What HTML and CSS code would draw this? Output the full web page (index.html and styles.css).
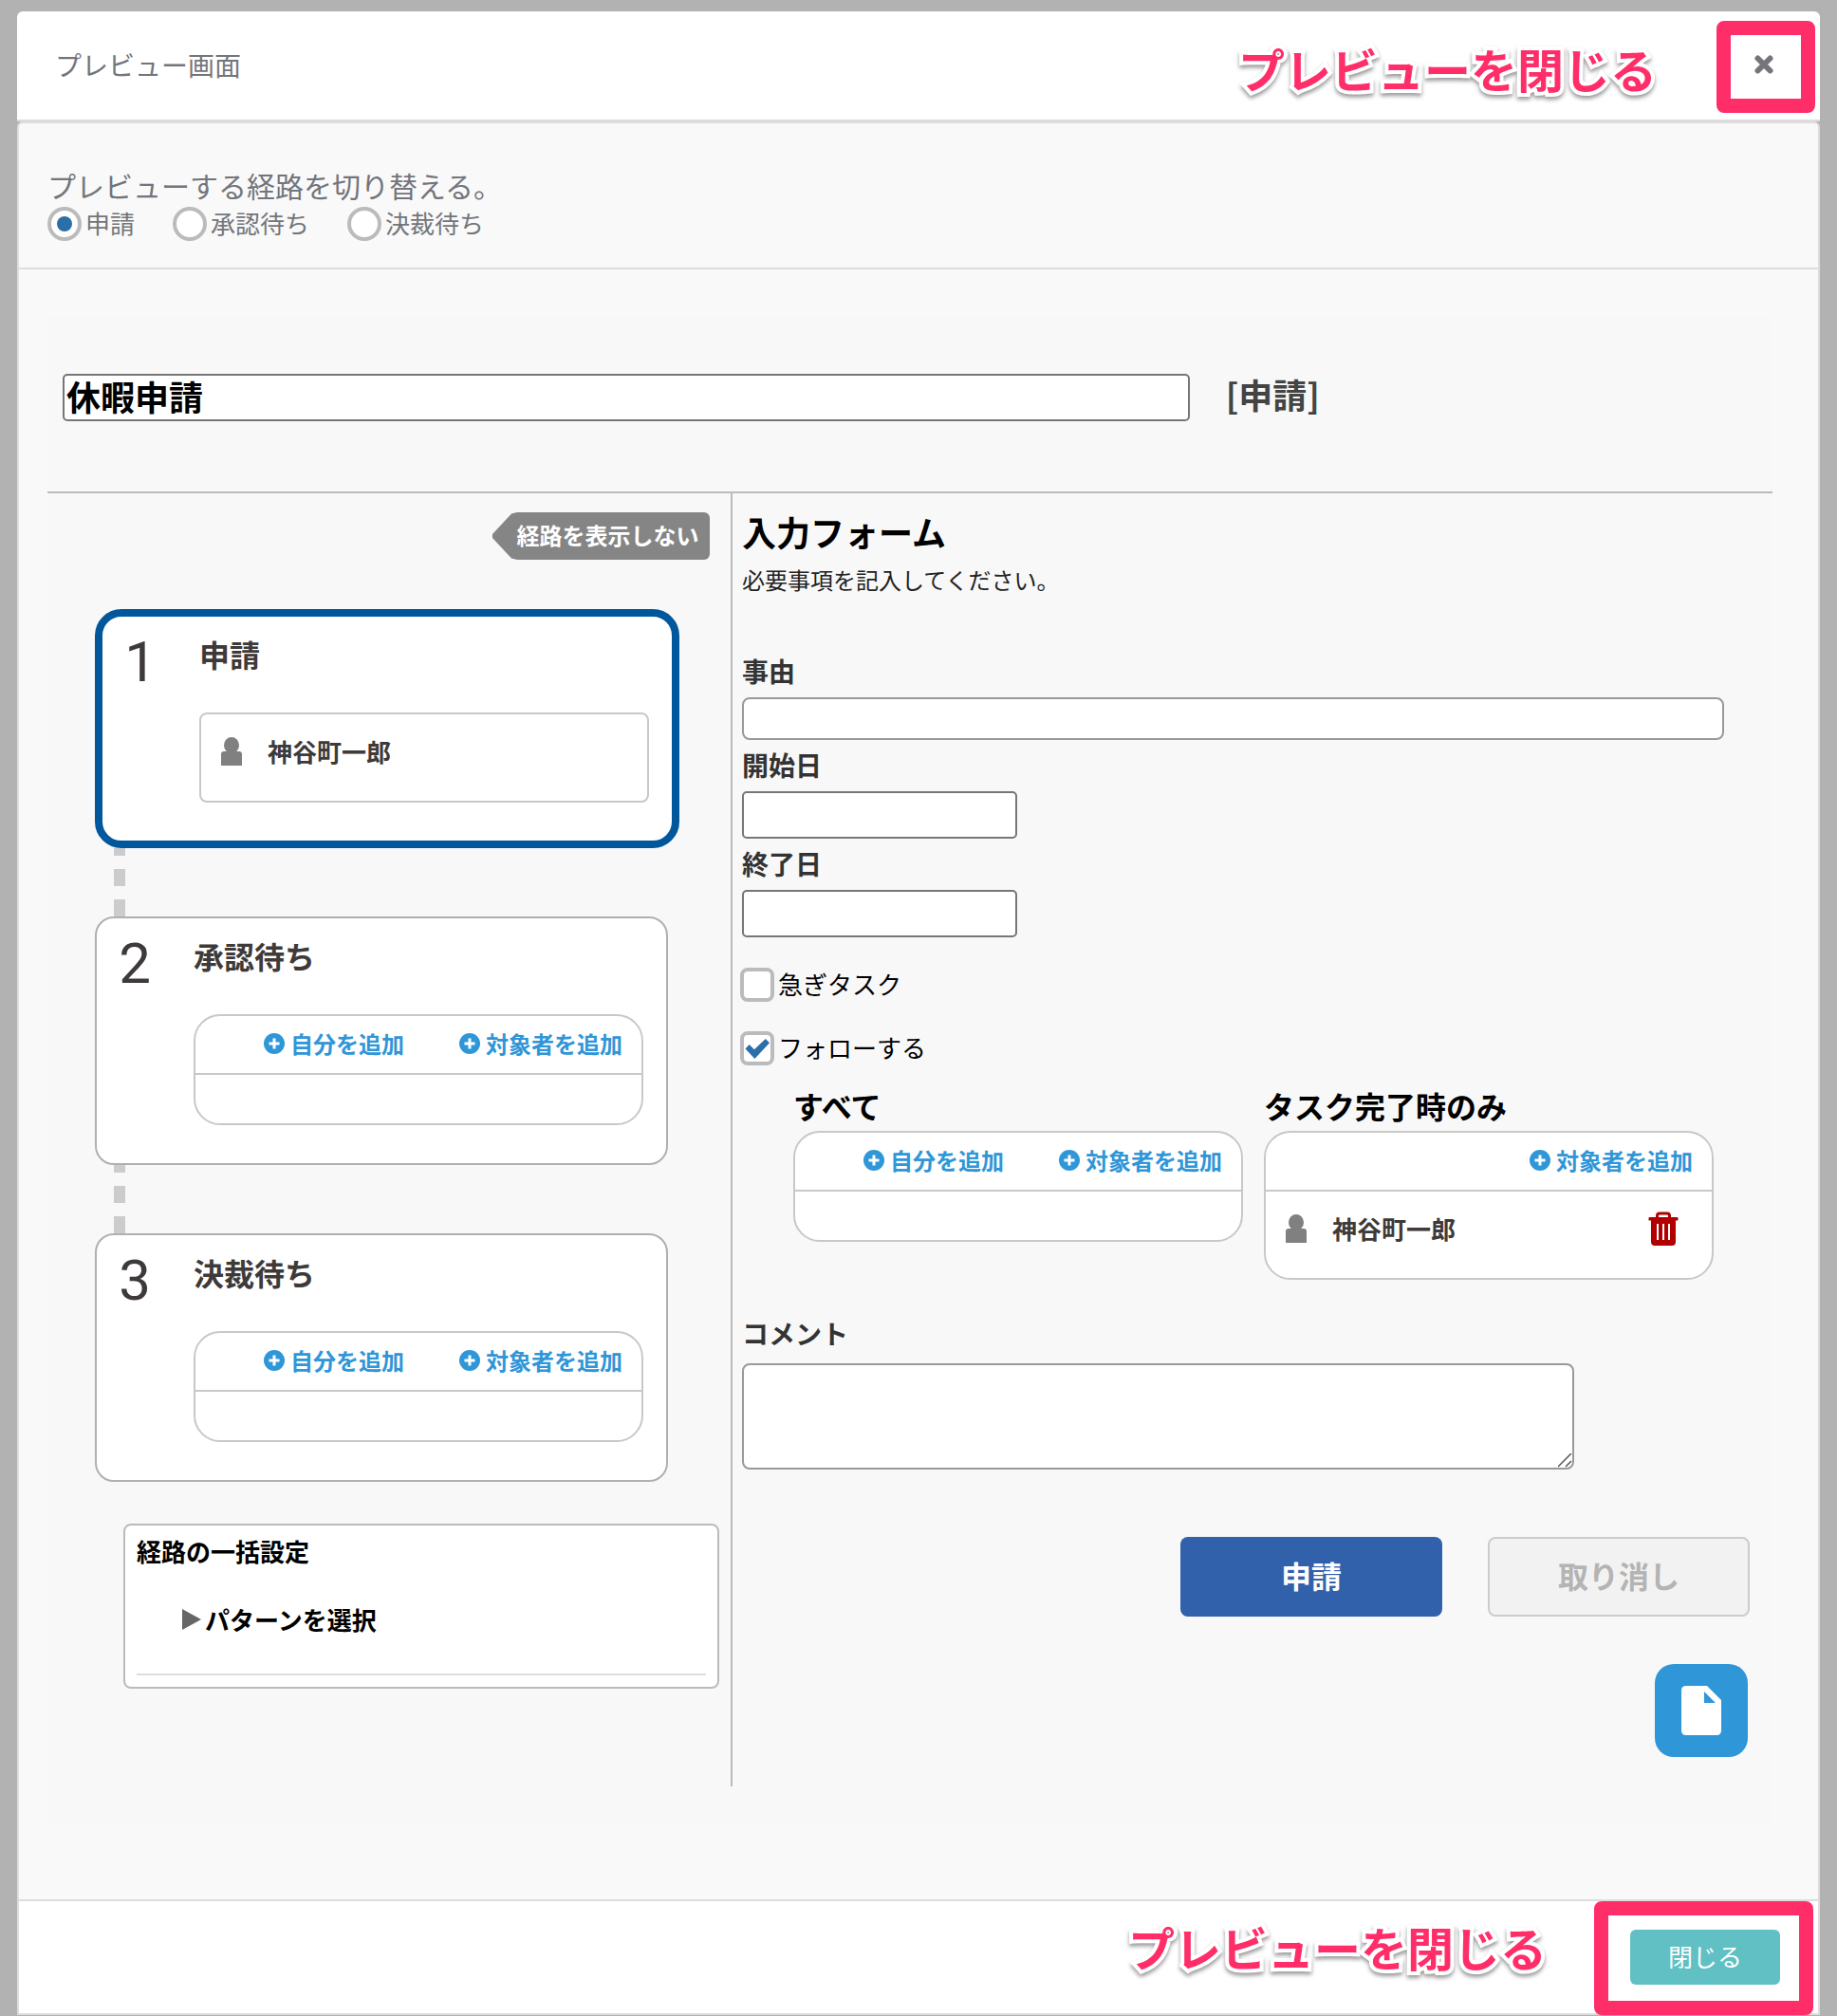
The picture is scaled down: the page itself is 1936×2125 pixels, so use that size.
FILE: index.html
```html
<!DOCTYPE html>
<html lang="ja">
<head>
<meta charset="utf-8">
<meta name="viewport" content="width=device-width, initial-scale=1">
<title>プレビュー画面</title>
<link rel="stylesheet" href="styles.css">
</head>
<body>
<svg class="sprite" aria-hidden="true">
  <symbol id="plus" viewBox="0 0 22 22"><circle cx="11" cy="11" r="11" fill="currentColor"/><path d="M11 5.500v11M5.500 11h11" stroke="#fff" stroke-width="3"/></symbol>
  <symbol id="person" viewBox="0 0 22 30"><ellipse cx="11" cy="8.500" rx="8" ry="8.500" fill="currentColor"/><path d="M7 13h8v4H7z" fill="currentColor"/><path d="M0 18q0-3 3-3h16q3 0 3 3v12H0z" fill="currentColor"/></symbol>
</svg>
<div class="modal" role="dialog" aria-labelledby="modal-title">
  <header class="modal-header">
    <h1 class="modal-title" id="modal-title">プレビュー画面</h1>
    <button class="close-icon" type="button" aria-label="閉じる">
      <svg width="22" height="22" viewBox="0 0 22 22"><path d="M4.500 4.500l13 13M17.500 4.500l-13 13" stroke="currentColor" stroke-width="6" stroke-linecap="round"/></svg>
    </button>
    <span class="note note-top">プレビューを閉じる</span>
    <span class="frame frame-top"></span>
  </header>

  <main class="modal-body">
    <fieldset class="switcher">
      <legend class="switcher-title">プレビューする経路を切り替える。</legend>
      <div class="radios">
        <label class="choice"><input class="radio" type="radio" name="route" checked>申請</label>
        <label class="choice"><input class="radio" type="radio" name="route">承認待ち</label>
        <label class="choice"><input class="radio" type="radio" name="route">決裁待ち</label>
      </div>
    </fieldset>

    <div class="panel">
      <div class="task-head">
        <input class="text task-name" type="text" value="休暇申請" aria-label="タスク名">
        <h2 class="task-state">[申請]</h2>
      </div>

      <div class="columns">
        <section class="route">
          <button class="route-toggle" type="button">経路を表示しない</button>

          <article class="step step-current">
            <span class="step-no">1</span>
            <div class="step-main">
              <h3 class="step-title">申請</h3>
              <div class="box box-plain">
                <div class="member"><svg class="person"><use href="#person"/></svg><span>神谷町一郎</span></div>
              </div>
            </div>
          </article>
          <div class="connector"></div>
          <article class="step">
            <span class="step-no">2</span>
            <div class="step-main">
              <h3 class="step-title">承認待ち</h3>
              <div class="box">
                <div class="box-head">
                  <a class="add" href="#"><svg class="plus"><use href="#plus"/></svg>自分を追加</a>
                  <a class="add" href="#"><svg class="plus"><use href="#plus"/></svg>対象者を追加</a>
                </div>
                <div class="box-empty"></div>
              </div>
            </div>
          </article>
          <div class="connector"></div>
          <article class="step">
            <span class="step-no">3</span>
            <div class="step-main">
              <h3 class="step-title">決裁待ち</h3>
              <div class="box">
                <div class="box-head">
                  <a class="add" href="#"><svg class="plus"><use href="#plus"/></svg>自分を追加</a>
                  <a class="add" href="#"><svg class="plus"><use href="#plus"/></svg>対象者を追加</a>
                </div>
                <div class="box-empty"></div>
              </div>
            </div>
          </article>

          <section class="batch">
            <h3 class="batch-title">経路の一括設定</h3>
            <button class="pattern" type="button">
              <svg width="20" height="22" viewBox="0 0 20 22"><path d="M0 0l20 11L0 22z" fill="#666"/></svg>パターンを選択
            </button>
            <hr class="batch-line">
          </section>
        </section>

        <form class="form">
          <h2 class="form-title">入力フォーム</h2>
          <p class="form-lead">必要事項を記入してください。</p>

          <div class="fields">
            <label class="label" for="reason">事由</label>
            <input class="text text-wide" id="reason" type="text">
            <label class="label" for="start">開始日</label>
            <input class="text text-date" id="start" type="text">
            <label class="label" for="end">終了日</label>
            <input class="text text-date" id="end" type="text">
          </div>

          <div class="checks">
            <label class="choice"><input class="check" type="checkbox">急ぎタスク</label>
            <label class="choice"><input class="check" type="checkbox" checked>フォローする</label>
          </div>

          <div class="follow">
            <div>
              <h3 class="follow-title">すべて</h3>
              <div class="box">
                <div class="box-head">
                  <a class="add" href="#"><svg class="plus"><use href="#plus"/></svg>自分を追加</a>
                  <a class="add" href="#"><svg class="plus"><use href="#plus"/></svg>対象者を追加</a>
                </div>
                <div class="box-empty"></div>
              </div>
            </div>
            <div>
              <h3 class="follow-title">タスク完了時のみ</h3>
              <div class="box">
                <div class="box-head">
                  <a class="add" href="#"><svg class="plus"><use href="#plus"/></svg>対象者を追加</a>
                </div>
                <div class="member">
                  <svg class="person"><use href="#person"/></svg><span>神谷町一郎</span>
                  <button class="trash" type="button" aria-label="削除">
                    <svg width="32" height="36" viewBox="0 0 32 36"><path d="M9.500 7V4.500Q9.500 2 12 2h8q2.500 0 2.500 2.500V7" fill="none" stroke="#b00000" stroke-width="3"/><path d="M1.500 6h29a1 1 0 0 1 1 1v2.500H.5V7a1 1 0 0 1 1-1zM3 9h26v23q0 4-4 4H7q-4 0-4-4z" fill="#b00000"/><path d="M10 13v17M16 13v17M22 13v17" stroke="#fff" stroke-width="2"/></svg>
                  </button>
                </div>
              </div>
            </div>
          </div>

          <label class="label label-comment" for="comment">コメント</label>
          <textarea class="comment" id="comment"></textarea>

          <div class="actions">
            <button class="btn btn-submit" type="button">申請</button>
            <button class="btn btn-cancel" type="button" disabled>取り消し</button>
          </div>
          <div class="attach">
            <button class="file-button" type="button" aria-label="ファイル">
              <svg width="42" height="52" viewBox="0 0 42 52"><path fill-rule="evenodd" d="M5 0h22l15 15v32q0 5-5 5H5q-5 0-5-5V5q0-5 5-5zM24 6v12h12z" fill="#fff"/></svg>
            </button>
          </div>
        </form>
      </div>
    </div>
  </main>

  <footer class="modal-footer">
    <button class="close-button" type="button">閉じる</button>
    <span class="note note-bottom">プレビューを閉じる</span>
    <span class="frame frame-bottom"></span>
  </footer>
</div>
</body>
</html>
```
FILE: styles.css
```css
*, *::before, *::after { box-sizing: border-box; }

body {
  margin: 0;
  padding: 12px 18px 0;
  background: #b2b2b2;
  color: #000;
  font-family: "Noto Sans CJK JP", "Noto Sans", sans-serif;
  font-size: 26px;
  line-height: 36px;
}
h1, h2, h3, p { margin: 0; }
button, input, textarea { font: inherit; margin: 0; }
button { padding: 0; border: 0; background: none; cursor: pointer; }
svg { display: block; flex: none; }
.sprite { width: 0; height: 0; position: absolute; }

/* Modal frame */
.modal-header {
  position: relative;
  display: flex;
  align-items: center;
  justify-content: space-between;
  height: 116px;
  padding: 0 39px 2px 40px;
  border-bottom: 2px solid #ddd;
  border-radius: 6px 6px 0 0;
  background: #fff;
}
.modal-title { font-size: 28px; font-weight: 400; color: #73757b; }
.close-icon { display: grid; place-items: center; width: 40px; height: 40px; color: #73757b; }
.modal-body {
  padding-bottom: 79px;
  border: 2px solid #ddd;
  border-radius: 6px 6px 0 0;
  background: #f9f9f9;
}
.modal-footer {
  position: relative;
  display: flex;
  justify-content: flex-end;
  padding: 30px 40px;
  border: 2px solid #ddd;
  border-top: 0;
  background: #fff;
}
.close-button {
  width: 158px;
  height: 58px;
  padding-bottom: 2px;
  border-radius: 6px;
  background: #61c0c4;
  color: #fff;
}

/* Callouts over the close controls */
.note {
  position: absolute;
  color: #ff2e69;
  font-size: 49px;
  line-height: 48px;
  font-weight: 700;
  white-space: nowrap;
  -webkit-text-stroke: 8px #fff;
  paint-order: stroke fill;
  filter: drop-shadow(0 3px 2px rgba(0, 0, 0, .4));
}
.note-top { top: 36px; right: 172px; }
.note-bottom { top: 24px; right: 286px; }
.frame {
  position: absolute;
  border: 15px solid #ff2e69;
  border-radius: 8px;
  pointer-events: none;
}
.frame-top { top: 10px; right: 5px; width: 104px; height: 97px; }
.frame-bottom { top: 0; right: 5px; width: 231px; height: 120px; }

/* Route switcher */
.switcher {
  margin: 0;
  padding: 47px 30px 28px;
  border: 0;
  border-bottom: 2px solid #ddd;
  color: #73757b;
}
.switcher-title { float: left; width: 100%; padding: 0; margin-bottom: 5px; font-size: 30px; }
.radios { display: flex; clear: both; gap: 40px; }
.choice { display: flex; align-items: flex-start; gap: 4px; line-height: 34px; }
.radio, .check {
  appearance: none;
  display: grid;
  place-items: center;
  flex: none;
  width: 36px;
  height: 36px;
  border: 4px solid #bbb;
  background: #fff;
}
.radio { border-radius: 50%; }
.radio:checked::before {
  content: "";
  width: 16px;
  height: 16px;
  border-radius: 50%;
  background: #2a6fa8;
}
.check { border-radius: 8px; }
.check:checked::before {
  content: "";
  width: 26px;
  height: 22px;
  background: #2a6fa8;
  clip-path: polygon(2% 52%, 18% 32%, 38% 56%, 84% 4%, 100% 24%, 40% 100%);
}

/* Panel */
.panel { margin: 50px 48px 0 30px; padding-bottom: 40px; background: #f8f8f8; }
.task-head {
  display: flex;
  align-items: center;
  gap: 38px;
  padding: 60px 16px 74px;
  border-bottom: 2px solid #bbb;
}
.text { display: block; padding: 0 2px 2px; border: 2px solid #767676; border-radius: 5px; background: #fff; }
.task-name { width: 66.500%; height: 50px; padding-bottom: 4px; font-size: 36px; font-weight: 700; }
.task-state { padding-bottom: 8px; font-size: 36px; font-weight: 700; color: #444; }
.columns { display: flex; }

/* Route column */
.route { flex: none; width: 720px; padding: 20px 0 0 50px; }
.route-toggle {
  display: block;
  width: 229px;
  height: 50px;
  margin: 0 22px 52px auto;
  padding: 0 0 2px 14px;
  border-radius: 6px;
  background: #858585;
  color: #fff;
  font-size: 24px;
  font-weight: 700;
  clip-path: polygon(0 46%, 20px 3%, 26px 0, 100% 0, 100% 100%, 26px 100%, 20px 97%, 0 54%);
}
.step {
  display: flex;
  width: 604px;
  padding-bottom: 40px;
  border: 2px solid #b0b0b0;
  border-radius: 20px;
  background: #fff;
  color: #3e3a39;
}
.step-current { width: 616px; border: 8px solid #00579b; border-radius: 28px; }
.step-no {
  width: 80px;
  margin-right: 22px;
  padding-top: 18px;
  font-family: Roboto, sans-serif;
  font-size: 60px;
  line-height: 60px;
  text-align: center;
}
.step-main { width: 474px; }
.step-title { padding: 15px 0 38px; font-size: 32px; line-height: 48px; }
.connector {
  width: 12px;
  height: 72px;
  margin-left: 20px;
  background: repeating-linear-gradient(to top, #ccc 0 18px, transparent 18px 32px);
}

/* Member boxes */
.box { width: 474px; border: 2px solid #c8c8c8; border-radius: 28px; background: #fff; }
.box-plain { border-radius: 8px; }
.box-head {
  display: flex;
  align-items: center;
  justify-content: flex-end;
  gap: 58px;
  height: 62px;
  padding: 0 20px 2px 0;
  border-bottom: 2px solid #c8c8c8;
}
.box-empty { height: 51px; }
.add {
  display: flex;
  align-items: center;
  gap: 6px;
  color: #2f96d8;
  font-size: 24px;
  font-weight: 700;
  text-decoration: none;
}
.plus { width: 22px; height: 22px; }
.member {
  display: flex;
  align-items: center;
  height: 91px;
  padding: 0 35px 13px 21px;
  color: #3e3a39;
  font-weight: 700;
}
.person { width: 22px; height: 30px; margin-right: 27px; color: #808080; }
.trash { margin-left: auto; }

/* Batch settings */
.batch {
  width: 628px;
  margin: 44px 0 0 30px;
  padding: 9px 12px 12px;
  border: 2px solid #bbb;
  border-radius: 8px;
  background: #fff;
}
.batch-title { font-size: 26px; }
.pattern { display: flex; align-items: center; gap: 4px; margin: 36px 0 39px 48px; font-weight: 700; }
.batch-line { margin: 0; border: 0; border-top: 2px solid #ddd; }

/* Form column */
.form { flex: 1; padding: 16px 0 31px 10px; border-left: 2px solid #bbb; }
.form-title { font-size: 36px; line-height: 48px; }
.form-lead { margin-top: 10px; font-size: 24px; line-height: 34px; color: #222; }
.fields { margin-top: 53px; }
.label {
  display: block;
  padding-bottom: 2px;
  color: #333;
  font-size: 28px;
  line-height: 52px;
  font-weight: 700;
}
.text-wide { width: calc(100% - 51px); height: 45px; border-color: #999; border-radius: 8px; }
.text-date { width: 290px; height: 50px; }
.checks { display: grid; justify-items: start; gap: 31px; margin: 32px 0 0 -2px; }
.follow { display: flex; align-items: flex-start; gap: 22px; margin: 18px 0 0 54px; }
.follow-title { margin-bottom: 3px; font-size: 32px; line-height: 48px; }
.label-comment { margin-top: 30px; padding-bottom: 6px; }
.comment {
  display: block;
  width: 100%;
  max-width: 877px;
  height: 112px;
  border: 2px solid #999;
  border-radius: 8px;
  background: #fff;
}
.comment::-webkit-resizer {
  background: url("data:image/svg+xml,%3Csvg xmlns='http://www.w3.org/2000/svg' width='15' height='15'%3E%3Cpath d='M0 14L14 0M8 14L14 8' stroke='%23555' stroke-width='1.500'/%3E%3C/svg%3E") no-repeat;
}
.actions { display: flex; justify-content: flex-end; gap: 48px; margin: 71px 24px 0 0; }
.btn { width: 276px; height: 84px; padding-bottom: 4px; border-radius: 8px; font-size: 32px; font-weight: 700; }
.btn-submit { background: #3261ab; color: #fff; }
.btn-cancel { border: 2px solid #ccc; background: #f2f2f2; color: #b4b4b4; }
.attach { display: flex; justify-content: flex-end; margin: 50px 26px 0 0; }
.file-button {
  display: grid;
  place-items: center;
  width: 98px;
  height: 98px;
  border-radius: 20px;
  background: #2f96d8;
}
```
